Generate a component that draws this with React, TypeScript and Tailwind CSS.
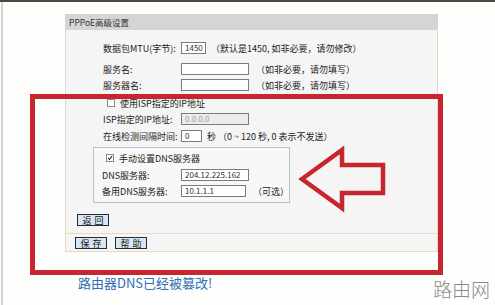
import type { ReactNode } from 'react';

const cjk = { fontFamily: '"Noto Sans CJK SC", "Liberation Sans", sans-serif' };

const Field = ({ w, value, disabled }: { w: string; value?: string; disabled?: boolean }) => (
  <div
    className={`${w} h-[12px] border border-[#7c7c7c] flex items-center pl-[3px] text-[8px] leading-none ${
      disabled ? 'bg-[#ececec] text-[#a0a0a0]' : 'bg-white text-[#333]'
    }`}
  >
    {value}
  </div>
);

const Row = ({ label, children, labelW, className = '' }: { label: string; children: ReactNode; labelW: string; className?: string }) => (
  <div className={`flex items-center h-[12px] ${className}`}>
    <div className={`${labelW} shrink-0 text-[9px] leading-none text-[#222]`}>{label}</div>
    {children}
  </div>
);

const Hint = ({ children, ml = 'ml-[7px]' }: { children: ReactNode; ml?: string }) => (
  <span className={`${ml} text-[9px] leading-none text-[#222] whitespace-nowrap`}>{children}</span>
);

const Check = ({ checked }: { checked?: boolean }) => (
  <div className="w-[8px] h-[8px] border border-[#8a8a8a] bg-white flex items-center justify-center">
    {checked && (
      <svg viewBox="0 0 8 8" className="w-[8px] h-[8px]">
        <path d="M1.2 4 L3.2 6 L6.8 1.5" stroke="#222" strokeWidth="1.4" fill="none" />
      </svg>
    )}
  </div>
);

const Btn = ({ children }: { children: string }) => (
  <div className="w-[32px] h-[12px] border border-[#2a2a2a] bg-[#d6e6f3] flex items-center justify-center text-[9px] leading-none tracking-[3px] pl-[3px] text-[#111]">
    {children}
  </div>
);

export default function App() {
  return (
    <div className="relative w-[495px] h-[305px] bg-[#fefefd] overflow-hidden" style={cjk}>
      <div className="h-[2px] bg-[#4a4942]" />
      <div className="ml-[1px] border-l-2 border-[#d3d3d3] h-[303px] pt-[12px]">
        <div className="ml-[62px] w-[373px]">
          <div className="h-[16px] bg-[#d5d5d5] flex items-center pl-[4px] text-[8.5px] leading-none text-[#333]">
            PPPoE高级设置
          </div>
          <div className="bg-[#f5f5f5] border-x border-[#e4d8c8] pb-0 flex flex-col">
            <div className="pl-[37px] flex flex-col">
              <Row label="数据包MTU(字节):" labelW="w-[78px]" className="mt-[12px]">
                <Field w="w-[25px]" value="1450" />
                <Hint ml="ml-[5px]">（默认是1450, 如非必要，请勿修改）</Hint>
              </Row>
              <Row label="服务名:" labelW="w-[78px]" className="mt-[9px]">
                <Field w="w-[68px]" />
                <Hint>（如非必要，请勿填写）</Hint>
              </Row>
              <Row label="服务器名:" labelW="w-[78px]" className="mt-[4px]">
                <Field w="w-[68px]" />
                <Hint>（如非必要，请勿填写）</Hint>
              </Row>
              <div className="mt-[6px] h-[12px] flex items-center pl-[4px] gap-[5px]">
                <Check />
                <span className="text-[9px] leading-none text-[#222]">使用ISP指定的IP地址</span>
              </div>
              <Row label="ISP指定的IP地址:" labelW="w-[78px]" className="mt-[4px]">
                <Field w="w-[68px]" value="0.0.0.0" disabled />
              </Row>
              <Row label="在线检测间隔时间:" labelW="w-[78px]" className="mt-[5px]">
                <Field w="w-[21px]" value="0" />
                <Hint ml="ml-[5px]">秒 （0 ~ 120 秒, 0 表示不发送）</Hint>
              </Row>
            </div>
            <div className="ml-[27px] mt-[5px] w-[197px] border border-[#aec2cf] bg-[#f8f8f8] pt-[4px] pb-[5px] pl-[8px] flex flex-col">
              <div className="h-[12px] flex items-center pl-[4px] gap-[5px]">
                <Check checked />
                <span className="text-[9px] leading-none text-[#222]">手动设置DNS服务器</span>
              </div>
              <Row label="DNS服务器:" labelW="w-[79px]" className="mt-[5px]">
                <Field w="w-[68px]" value="204.12.225.162" />
              </Row>
              <Row label="备用DNS服务器:" labelW="w-[79px]" className="mt-[4px]">
                <Field w="w-[68px]" value="10.1.1.1" />
                <Hint>（可选）</Hint>
              </Row>
            </div>
            <div className="ml-[11px] mt-[11px]">
              <Btn>返回</Btn>
            </div>
            <div className="mt-[7px] h-px bg-[#edd6bc]" />
            <div className="ml-[9px] mt-[3px] flex gap-[8px]">
              <Btn>保存</Btn>
              <Btn>帮助</Btn>
            </div>
            <div className="mt-[2px] h-px bg-[#edd6bc]" />
          </div>
        </div>
        <div className="flex justify-between mt-[23px]">
          <span className="ml-[75px] text-[13px] leading-[15px] text-[#2f6eb6]">路由器DNS已经被篡改!</span>
          <span className="mr-[5px] mt-[3px] text-[19px] leading-[22px] font-light text-[#8a8a8a]">路由网</span>
        </div>
      </div>

      <div className="absolute left-[30px] top-[94px] w-[413px] h-[181px] border-[5px] border-[#c8262e]" />
      <svg className="absolute left-0 top-0" width="495" height="305" viewBox="0 0 495 305">
        <polygon
          points="302,179 342,150 342,165 383,165 383,193 342,193 342,208"
          fill="none"
          stroke="#c8262e"
          strokeWidth="4.5"
          strokeLinejoin="miter"
        />
      </svg>
    </div>
  );
}
